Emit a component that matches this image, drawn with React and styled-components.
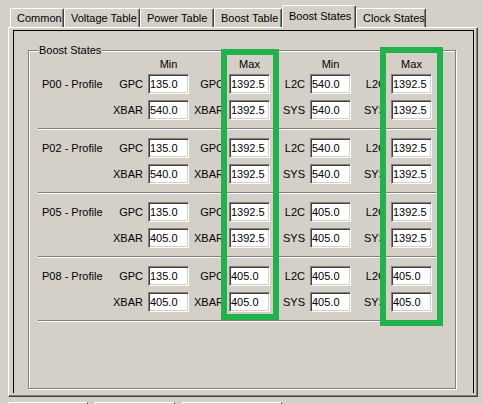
import React from 'react';
import styled, { createGlobalStyle } from 'styled-components';

const GlobalStyle = createGlobalStyle`
  html, body {
    margin: 0;
    padding: 0;
    background: #d4d0c8;
  }
  body {
    font-family: "Liberation Sans", Arial, sans-serif;
    font-size: 11px;
    color: #000;
  }
`;

const Window = styled.div`
  position: relative;
  width: 483px;
  height: 404px;
  overflow: hidden;
  box-sizing: border-box;
  padding: 5px 0 0 8px;
  background: #d4d0c8;
`;

const TabStrip = styled.div`
  display: flex;
  align-items: flex-end;
  height: 22px;
  padding-left: 2px;
`;

const Tab = styled.div`
  position: relative;
  box-sizing: border-box;
  width: ${p => p.$w}px;
  height: ${p => (p.$active ? 23 : 19)}px;
  margin-bottom: ${p => (p.$active ? -1 : 0)}px;
  z-index: ${p => (p.$active ? 2 : 0)};
  padding: ${p => (p.$active ? '2px 0 0 6px' : '0 0 0 6px')};
  line-height: ${p => (p.$active ? 17 : 18)}px;
  white-space: nowrap;
  background: #d4d0c8;
  border-top: 1px solid #fff;
  border-left: 1px solid #fff;
  border-right: 1px solid #404040;
  border-top-left-radius: 2px;
  border-top-right-radius: 2px;
  box-shadow: inset -1px 0 0 #808080;
`;

const Panel = styled.div`
  box-sizing: border-box;
  width: 470px;
  height: 370px;
  padding: 2px 3px 0 4px;
  border-top: 1px solid #fff;
  border-left: 1px solid #fff;
  border-right: 1px solid #404040;
  border-bottom: 1px solid #404040;
  box-shadow: inset -1px -1px 0 #808080;
`;

const Frame = styled.div`
  box-sizing: border-box;
  height: 363px;
  padding: 13px 0 0 14px;
  border: 1px solid #000;
  border-bottom: none;
`;

const Group = styled.fieldset`
  box-sizing: border-box;
  margin: 0;
  min-width: 0;
  width: 428px;
  height: 345px;
  padding: 0 9px;
  border: 1px solid #808080;
  box-shadow: 1px 1px 0 #fff, inset 1px 1px 0 #fff;
`;

const Legend = styled.legend`
  padding: 0 1px;
  margin-left: 0;
  line-height: 13px;
  background: #d4d0c8;
`;

const Content = styled.div`
  width: 398px;
`;

const Grid = styled.div`
  display: grid;
  grid-template-columns: 60px 46px 41px 40px 41px 40px 41px 40px 41px;
  grid-auto-rows: 20px;
  row-gap: 6px;
  padding-left: 4px;
  align-items: center;
`;

const HeaderRow = styled(Grid)`
  grid-auto-rows: 17px;
  align-items: start;
  line-height: 15px;
`;

const Heading = styled.div`
  grid-column: ${p => p.$col};
  text-align: center;
`;

const Profile = styled.div`
  grid-column: 1;
  white-space: nowrap;
`;

const Label = styled.div`
  grid-column: ${p => p.$col};
  text-align: right;
  padding-right: 5px;
  white-space: nowrap;
`;

const Field = styled.input`
  grid-column: ${p => p.$col};
  box-sizing: border-box;
  width: 41px;
  height: 20px;
  margin: 0;
  padding: 0 0 0 1px;
  font-family: "Liberation Sans", Arial, sans-serif;
  font-size: 11px;
  color: #000;
  background: #fff;
  border-top: 1px solid #808080;
  border-left: 1px solid #808080;
  border-right: 1px solid #fff;
  border-bottom: 1px solid #fff;
  box-shadow: inset 1px 1px 0 #404040, inset -1px -1px 0 #d4d0c8;
  outline: none;
`;

const Separator = styled.div`
  height: 0;
  margin: 8px 0;
  border-top: 1px solid #808080;
  border-bottom: 1px solid #fff;
`;

const Highlight = styled.div`
  position: absolute;
  box-sizing: border-box;
  left: ${p => p.$x}px;
  top: ${p => p.$y}px;
  width: ${p => p.$w}px;
  height: ${p => p.$h}px;
  border: 6px solid #22b14c;
  pointer-events: none;
`;

const Footer = styled.div`
  display: flex;
  gap: 7px;
  margin-top: 5px;
`;

const FooterButton = styled.div`
  box-sizing: border-box;
  width: ${p => p.$w}px;
  height: 12px;
  border-top: 1px solid #fff;
  border-left: 1px solid #fff;
  border-right: 1px solid #404040;
`;

const tabs = [
  { name: 'Common', w: 54 },
  { name: 'Voltage Table', w: 76 },
  { name: 'Power Table', w: 74 },
  { name: 'Boost Table', w: 68 },
  { name: 'Boost States', w: 74, active: true },
  { name: 'Clock States', w: 70 },
];

const profiles = [
  { name: 'P00', gpc: ['135.0', '1392.5'], xbar: ['540.0', '1392.5'], l2c: ['540.0', '1392.5'], sys: ['540.0', '1392.5'] },
  { name: 'P02', gpc: ['135.0', '1392.5'], xbar: ['540.0', '1392.5'], l2c: ['540.0', '1392.5'], sys: ['540.0', '1392.5'] },
  { name: 'P05', gpc: ['135.0', '1392.5'], xbar: ['405.0', '1392.5'], l2c: ['405.0', '1392.5'], sys: ['405.0', '1392.5'] },
  { name: 'P08', gpc: ['135.0', '405.0'], xbar: ['405.0', '405.0'], l2c: ['405.0', '405.0'], sys: ['405.0', '405.0'] },
];

const ProfileBlock = ({ p }) => (
  <>
    <Grid>
      <Profile>{p.name} - Profile</Profile>
      <Label $col={2}>GPC</Label>
      <Field $col={3} defaultValue={p.gpc[0]} />
      <Label $col={4}>GPC</Label>
      <Field $col={5} defaultValue={p.gpc[1]} />
      <Label $col={6}>L2C</Label>
      <Field $col={7} defaultValue={p.l2c[0]} />
      <Label $col={8}>L2C</Label>
      <Field $col={9} defaultValue={p.l2c[1]} />

      <Label $col={2}>XBAR</Label>
      <Field $col={3} defaultValue={p.xbar[0]} />
      <Label $col={4}>XBAR</Label>
      <Field $col={5} defaultValue={p.xbar[1]} />
      <Label $col={6}>SYS</Label>
      <Field $col={7} defaultValue={p.sys[0]} />
      <Label $col={8}>SYS</Label>
      <Field $col={9} defaultValue={p.sys[1]} />
    </Grid>
    <Separator />
  </>
);

export default function App() {
  return (
    <Window>
      <GlobalStyle />
      <TabStrip>
        {tabs.map(t => (
          <Tab key={t.name} $w={t.w} $active={t.active}>{t.name}</Tab>
        ))}
      </TabStrip>
      <Panel>
        <Frame>
          <Group>
            <Legend>Boost States</Legend>
            <Content>
              <HeaderRow>
                <Heading $col={3}>Min</Heading>
                <Heading $col={5}>Max</Heading>
                <Heading $col={7}>Min</Heading>
                <Heading $col={9}>Max</Heading>
              </HeaderRow>
              {profiles.map(p => <ProfileBlock key={p.name} p={p} />)}
            </Content>
          </Group>
        </Frame>
      </Panel>
      <Footer>
        <FooterButton $w={80} />
        <FooterButton $w={80} />
        <FooterButton $w={100} />
      </Footer>

      {/* annotation boxes drawn over the screenshot */}
      <Highlight $x={221} $y={49} $w={58} $h={271} />
      <Highlight $x={380} $y={47} $w={63} $h={279} />
    </Window>
  );
}
